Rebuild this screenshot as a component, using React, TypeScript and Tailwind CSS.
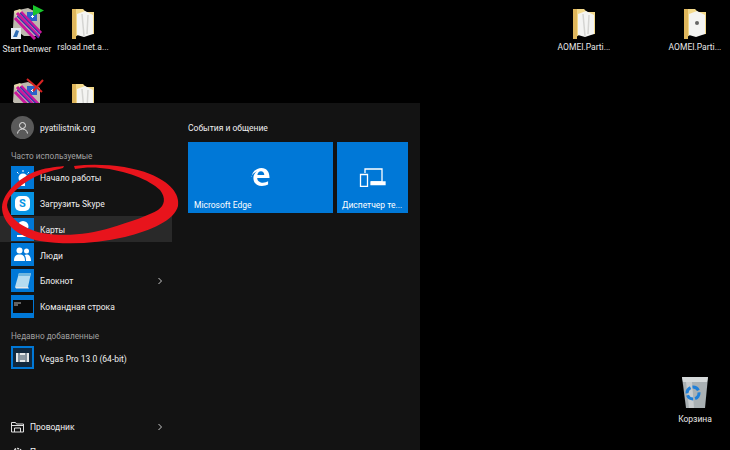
import React from "react";

const font = { fontFamily: 'Roboto,"Open Sans","Noto Sans",sans-serif' };

function Folder({ variant = 0 }: { variant?: number }) {
  return (
    <svg width="24" height="30" viewBox="0 0 24 30">
      <path d="M1 0h11l3 3h8v22L7 26l-6 4z" fill="#f3d98b" />
      <path d="M1 0h4v30H1z" fill="#dfb65c" />
      <path d="M6 5l8-3 8 4v19l-9 3-7-2z" fill="#f4f4f2" />
      {variant === 0 && <path d="M11 5l2 22M17 6l-1 19" stroke="#d5d5d2" strokeWidth="1.5" fill="none" />}
      {variant === 1 && <circle cx="14" cy="14" r="2" fill="#666" />}
    </svg>
  );
}

function Denwer({ flag }: { flag: "green" | "red" }) {
  return (
    <svg width="36" height="36" viewBox="0 0 36 36">
      <path d="M5 7l14-3 12 6v22H15L4 24z" fill="#bdb9ae" />
      <path d="M5 7l6-2 6 6-8 6z" fill="#e4d7a8" />
      <rect x="18" y="8" width="10" height="9" fill="#2a62c9" />
      <path d="M22 12.500h3M23.500 11v3" stroke="#fff" strokeWidth="1" />
      <path d="M8 9l22 24M6 14l20 21M12 8l20 21" stroke="#c8189c" strokeWidth="3" />
      <path d="M8 12l22 22M11 9l20 21" stroke="#3a2fb0" strokeWidth="1.200" />
      {flag === "green" ? (
        <path d="M24 1v11l11-5.500z" fill="#19c62c" />
      ) : (
        <path d="M18 1l15 13M34 2L24 13" stroke="#d92323" strokeWidth="2" fill="none" />
      )}
      {flag === "green" && <rect x="2" y="24" width="10" height="11" fill="#e8eef5" />}
      {flag === "green" && <path d="M4 33l3-7 3 1-2 6z" fill="#2f6db5" />}
    </svg>
  );
}

function DesktopIcon({ left, top, label, children }: { left: number; top: number; label?: string; children: React.ReactNode }) {
  return (
    <div className="absolute flex w-[74px] flex-col items-center" style={{ left, top }}>
      <div className="flex h-[38px] items-end justify-center">{children}</div>
      {label && <span className="mt-[3px] whitespace-nowrap text-[8.500px] leading-[12px] text-[#e8e8e8]">{label}</span>}
    </div>
  );
}

function Row({ icon, label, hover, chevron, tile = "bg-[#0078d7]" }: { icon: React.ReactNode; label: string; hover?: boolean; chevron?: boolean; tile?: string }) {
  return (
    <div className={`flex h-[25.7px] w-[172px] shrink-0 items-center pl-[11px] ${hover ? "bg-[#292929]" : ""}`}>
      <div className={`flex h-[23px] w-[23px] shrink-0 items-center justify-center ${tile}`}>{icon}</div>
      <span className="ml-[6px] flex-1 whitespace-nowrap pt-[2px] text-[8.500px] text-[#f0f0f0]">{label}</span>
      {chevron && <Chevron />}
    </div>
  );
}

function Chevron() {
  return (
    <svg width="6" height="8" viewBox="0 0 6 8" className="mr-[9px]">
      <path d="M1.500 1l3 3-3 3" stroke="#c8c8c8" strokeWidth="1" fill="none" />
    </svg>
  );
}

export default function App() {
  return (
    <div className="relative h-[450px] w-[730px] overflow-hidden bg-black" style={font}>
      <DesktopIcon left={-10} top={2} label="Start Denwer"><Denwer flag="green" /></DesktopIcon>
      <DesktopIcon left={46} top={0} label="rsload.net.a..."><div className="mb-[-1px]"><Folder /></div></DesktopIcon>
      <DesktopIcon left={-10} top={76}><Denwer flag="red" /></DesktopIcon>
      <DesktopIcon left={46} top={76}><Folder /></DesktopIcon>
      <DesktopIcon left={547} top={0} label="AOMEI.Parti..."><div className="mb-[-1px]"><Folder /></div></DesktopIcon>
      <DesktopIcon left={658} top={0} label="AOMEI.Parti..."><div className="mb-[-1px]"><Folder variant={1} /></div></DesktopIcon>
      <DesktopIcon left={658} top={372} label="Корзина">
        <svg width="30" height="36" viewBox="0 0 30 36">
          <path d="M2 3l26 0-3 31H6z" fill="#a9b0b3" />
          <path d="M2 3h26l-1 5H3z" fill="#d5d9da" />
          <path d="M6 8l3 26h5L12 8z" fill="#c7cbcd" />
          <circle cx="13" cy="19" r="6" fill="none" stroke="#1f7fd8" strokeWidth="3" strokeDasharray="7 2" />
        </svg>
      </DesktopIcon>

      {/* Start menu */}
      <div className="absolute left-0 top-[103px] flex h-[347px] w-[420px] bg-[#131313]">
        <div className="relative flex w-[172px] flex-col">
          <div className="flex h-[48px] shrink-0 items-center pl-[11px]">
            <div className="flex h-[23px] w-[23px] items-center justify-center rounded-full bg-[#5a5a5a]">
              <svg width="13" height="13" viewBox="0 0 13 13" fill="none" stroke="#e8e8e8" strokeWidth="1">
                <circle cx="6.500" cy="4.500" r="3" />
                <path d="M1.500 12.500c.5-3 2.500-4.500 5-4.500s4.500 1.500 5 4.500" />
              </svg>
            </div>
            <span className="ml-[6px] pt-[2px] text-[8.500px] text-[#f0f0f0]">pyatilistnik.org</span>
          </div>
          <div className="ml-[11px] h-[14px] shrink-0 text-[8.200px] leading-[10px] text-[#a0a0a0]">Часто используемые</div>
          <Row label="Начало работы" icon={
            <svg width="15" height="18" viewBox="0 0 15 18" fill="#fff">
              <circle cx="8" cy="9" r="4.500" />
              <rect x="6" y="14" width="4" height="3" />
              <path d="M8 1v2M2 3l1.500 1.500M14 3l-1.500 1.500" stroke="#fff" strokeWidth="1" />
            </svg>
          } />
          <Row tile="bg-[#0794e3]" label="Загрузить Skype" icon={
            <div className="flex h-[15px] w-[15px] items-center justify-center rounded-[5px] bg-white text-[11px] font-bold leading-none text-[#0794e3]">S</div>
          } />
          <Row hover label="Карты" icon={
            <svg width="16" height="18" viewBox="0 0 16 18" fill="#fff"><path d="M8 1a5.500 5.500 0 0 1 5.500 5.500C13.500 10 8 14 8 14S2.500 10 2.500 6.500A5.500 5.500 0 0 1 8 1z" /><path d="M2 15h12v2H2z" /></svg>
          } />
          <Row label="Люди" icon={
            <svg width="17" height="15" viewBox="0 0 17 15" fill="#fff">
              <circle cx="5.500" cy="3.500" r="3" /><circle cx="12.500" cy="4" r="2.500" />
              <path d="M0 14c0-5 2-6.500 5.500-6.500S11 9 11 14zM12 14c0-3-.5-5-1.500-6 3-1.500 6.500 0 6.500 6z" />
            </svg>
          } />
          <Row chevron label="Блокнот" icon={
            <svg width="18" height="17" viewBox="0 0 18 17">
              <path d="M5 1h12l-3 14H1z" fill="#b5dcf0" />
              <path d="M5 1h12l-1 3H4z" fill="#6fb7e0" />
              <path d="M1 15h13l1 1.500H2z" fill="#e8e8e8" />
            </svg>
          } />
          <Row label="Командная строка" icon={
            <svg width="20" height="13" viewBox="0 0 20 13">
              <rect width="20" height="13" fill="#0b0b0b" />
              <path d="M1 3h7M1 5h4" stroke="#bbb" strokeWidth="1" />
            </svg>
          } />
          <div className="ml-[11px] mt-[11px] h-[15px] shrink-0 text-[8.200px] leading-[12px] text-[#a0a0a0]">Недавно добавленные</div>
          <Row label="Vegas Pro 13.0 (64-bit)" icon={
            <svg width="19" height="19" viewBox="0 0 19 19">
              <rect width="19" height="19" fill="#10283e" />
              <rect x="3" y="5" width="13" height="9" fill="#e4e8ea" />
              <path d="M6 5v9M13 5v9" stroke="#20384e" strokeWidth="1" />
              <rect x="7" y="7" width="5" height="5" fill="#8a98a3" />
            </svg>
          } />
          <div className="mt-[43px] flex h-[26px] shrink-0 items-center pl-[11px]">
            <svg width="13" height="13" viewBox="0 0 13 13" fill="none" stroke="#e0e0e0" strokeWidth="1">
              <path d="M.5 12V2.500h4l1 1.500h7v8zM.5 5.500h12M3.500 12V8h6v4" />
            </svg>
            <span className="ml-[6px] flex-1 pt-[2px] text-[8.500px] text-[#f0f0f0]">Проводник</span>
            <Chevron />
          </div>
          <div className="flex h-[26px] shrink-0 items-center pl-[11px]">
            <svg width="13" height="13" viewBox="0 0 13 13" fill="none" stroke="#e0e0e0" strokeWidth="1.500">
              <circle cx="6.500" cy="6.500" r="4" strokeDasharray="2 1" />
            </svg>
            <span className="ml-[6px] text-[8.500px] text-[#f0f0f0]">Параметры</span>
          </div>
        </div>

        <div className="flex flex-col pl-[16px] pt-[19px]">
          <div className="h-[20px] text-[8.500px] leading-[12px] text-[#f0f0f0]">События и общение</div>
          <div className="flex gap-[4px]">
            <div className="relative flex h-[71px] w-[145px] items-center justify-center bg-[#0078d7]">
              <svg width="19" height="20" viewBox="0 0 20 21" className="mb-[1px]" fill="#fff">
                <path fillRule="evenodd" d="M.5 10.500C1.500 4.500 6 1 11 1c5.500 0 8.500 4 8.500 10.500H6.500c.3 3.500 3 5 6 5 2 0 4-.5 5.500-1.500v3.500c-1.500 1-4 1.500-6.500 1.500-5.500 0-9-3.500-9-8.500 0-3 1.500-5.500 4-7-2.500 1-5 3-6.500 6zM6.700 8.500H14c0-2.500-1.500-4-3.500-4s-3.500 1.500-3.800 4z" />
              </svg>
              <span className="absolute bottom-[1px] left-[6px] text-[8.500px] text-white">Microsoft Edge</span>
            </div>
            <div className="relative flex h-[71px] w-[71px] items-center justify-center bg-[#0078d7]">
              <svg width="27" height="19" viewBox="0 0 27 19" fill="none" stroke="#fff" strokeWidth="1.300" className="mb-[1px]">
                <path d="M6 5V1h17v13H12M1.500 6.500h7v12h-7z" />
                <path d="M12 14h14v2.500H12z" fill="#fff" />
              </svg>
              <span className="absolute bottom-[1px] left-[5px] whitespace-nowrap text-[8.500px] text-white">Диспетчер те...</span>
            </div>
          </div>
        </div>
      </div>

      {/* Red marker ellipse */}
      <svg className="absolute left-0 top-[155px]" width="180" height="90" viewBox="0 155 180 90">
        <path
          d="M74 166C100 163 130 166 150 174C170 182 180 194 178 206C175 220 150 231 125 237C95 244 65 245 40 241C18 237 2 223 2 207C3 192 20 178 34 172C44 168 55 167 64 166L63 168C50 171 40 174 33 178C20 185 8 195 7 205C8 218 24 229 42 233C66 237 90 234 110 228C130 222 150 215 158 210C165 205 166 198 160 190C150 180 125 170 100 168C90 167 82 168 75 169Z"
          fill="#e8141c"
        />
      </svg>
    </div>
  );
}
